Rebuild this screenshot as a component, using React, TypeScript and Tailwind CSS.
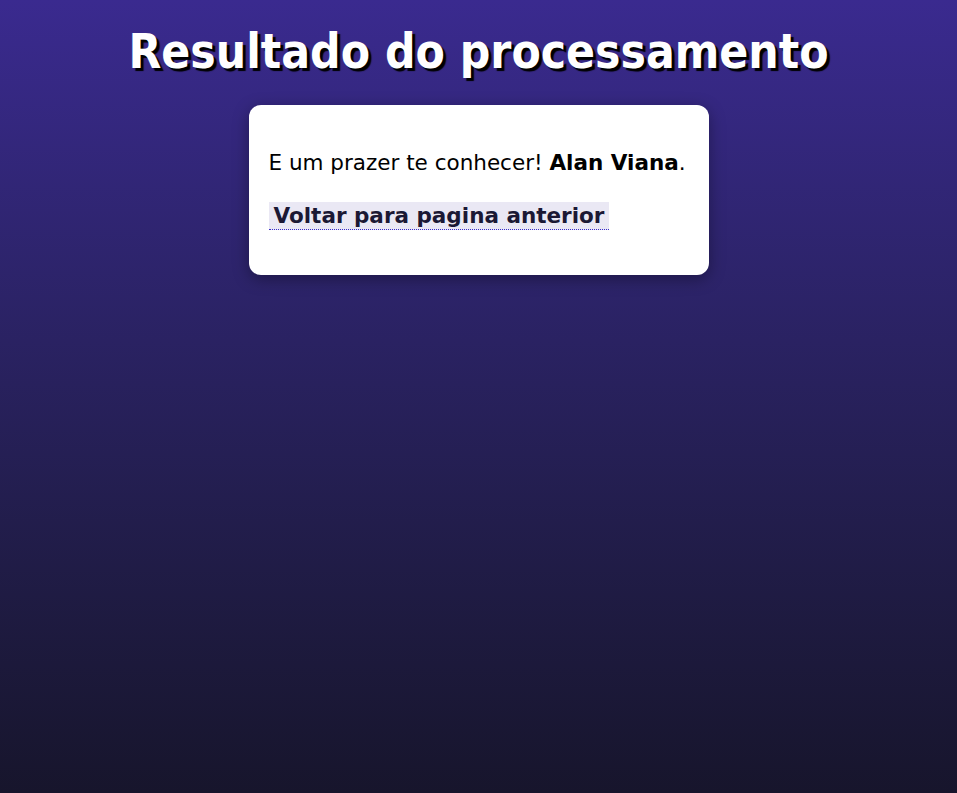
export default function App() {
  return (
    <div
      className="min-h-screen w-full bg-gradient-to-b from-[#3a2a8f] to-[#17152c] flex flex-col items-center pt-[24px]"
      style={{ fontFamily: '"DejaVu Sans", Verdana, sans-serif' }}
    >
      <h1 className="text-[47.5px] leading-[56px] font-bold text-white [font-family:'DejaVu_Sans_Condensed','DejaVu_Sans',sans-serif] [text-shadow:3px_3px_1px_#000]">
        Resultado do processamento
      </h1>

      {/* Card */}
      <main className="mt-[25px] w-[460px] bg-white rounded-[12px] shadow-[0_4px_16px_rgba(0,0,0,0.35)] px-[20px] py-[45px]">
        <p className="mb-[26px] text-[21.5px] leading-[26px] text-black">
          E um prazer te conhecer! <strong>Alan Viana</strong>.
        </p>
        <a
          href="#"
          className="block w-fit text-[21.5px] leading-[27px] font-bold text-[#1b1834] bg-[#eae8f4] px-[5px] border-b border-dotted border-[#3b2fc9]"
        >
          Voltar para pagina anterior
        </a>
      </main>
    </div>
  );
}
